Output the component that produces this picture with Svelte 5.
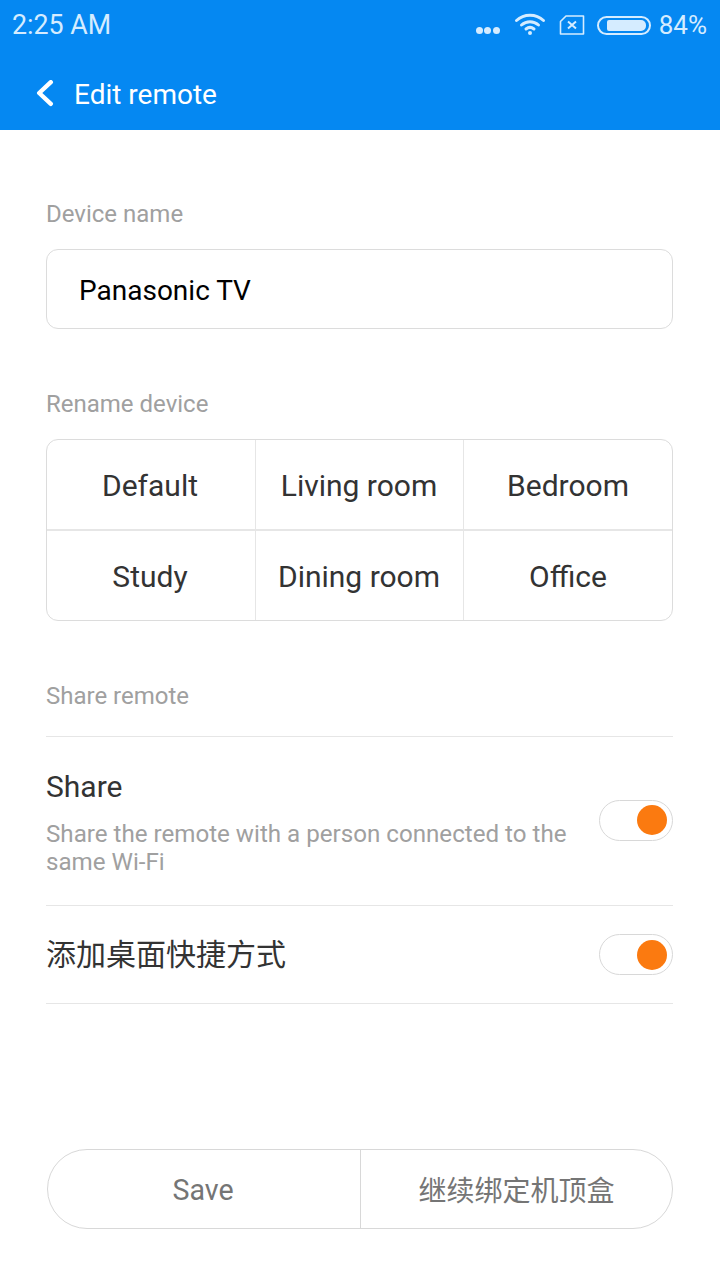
<script>
  let names = ["Default", "Living room", "Bedroom", "Study", "Dining room", "Office"];
</script>

<div class="page">
  <header class="top">
    <div class="status">
      <span class="time">2:25 AM</span>
      <div class="status-right">
        <span class="dots"><i></i><i></i><i></i></span>
        <svg class="wifi" width="32" height="24" viewBox="0 0 32 24" fill="none" stroke="#d5ecff" stroke-width="3" stroke-linecap="round">
          <path d="M2.5 8.5C10 1.5 22 1.5 29.5 8.5" />
          <path d="M7.5 13C12.5 8.5 19.5 8.5 24.5 13" />
          <path d="M12 17C14.5 15 17.5 15 20 17" />
          <circle cx="16" cy="21" r="2" fill="#d5ecff" stroke="none" />
        </svg>
        <svg class="sim" width="26" height="20" viewBox="0 0 26 20" fill="none" stroke="#d5ecff" stroke-width="1.6">
          <path d="M7 1H24.5V19H1.5V6.5Z" stroke-linejoin="round" />
          <path d="M9 6.5L17 13.5M17 6.5L9 13.5" stroke-width="2" />
        </svg>
        <span class="battery"><span class="level"></span></span>
        <span class="pct">84%</span>
      </div>
    </div>
    <div class="title-bar">
      <svg width="20" height="28" viewBox="0 0 20 28" fill="none" stroke="#fff" stroke-width="4.4" stroke-linecap="round" stroke-linejoin="round">
        <path d="M16.8 2.2L5.2 13L16.8 23.8" />
      </svg>
      <span class="title">Edit remote</span>
    </div>
  </header>

  <main class="content">
    <div class="label first">Device name</div>
    <div class="name-box"><span>Panasonic TV</span></div>

    <div class="label second">Rename device</div>
    <div class="grid">
      {#each names as name}
        <div class="cell"><span>{name}</span></div>
      {/each}
    </div>

    <div class="label third">Share remote</div>
    <div class="row share">
      <div class="row-text">
        <div class="row-title">Share</div>
        <div class="row-desc">Share the remote with a person connected to the same Wi-Fi</div>
      </div>
      <span class="toggle"><span class="knob"></span></span>
    </div>
    <div class="row shortcut">
      <div class="row-title cjk">添加桌面快捷方式</div>
      <span class="toggle"><span class="knob"></span></span>
    </div>
  </main>

  <div class="actions">
    <div class="btn save">Save</div>
    <div class="btn cjk">继续绑定机顶盒</div>
  </div>
</div>

<style>
  :global(body) {
    margin: 0;
    background: #fff;
  }

  .page {
    width: 720px;
    height: 1280px;
    display: flex;
    flex-direction: column;
    font-family: Roboto, "Noto Sans CJK SC", sans-serif;
    background: #fff;
  }

  .top {
    height: 130px;
    background: #0588f2;
    color: #fff;
  }

  .status {
    height: 50px;
    display: flex;
    justify-content: space-between;
    align-items: center;
    padding: 0 13px 0 12px;
    color: #d5ecff;
  }

  .time {
    font-size: 26.8px;
  }

  .status-right {
    display: flex;
    align-items: center;
  }

  .dots {
    display: flex;
    gap: 1.5px;
    margin-top: 11px;
    margin-right: 14px;
  }

  .dots i {
    width: 7px;
    height: 7px;
    border-radius: 50%;
    background: #d5ecff;
  }

  .wifi {
    margin-right: 13px;
    margin-top: -3px;
  }

  .sim {
    margin-right: 12px;
  }

  .battery {
    width: 54px;
    height: 19px;
    box-sizing: border-box;
    border: 2px solid #d5ecff;
    border-radius: 10px;
    padding: 2px 3px 2px 8px;
    margin-right: 8px;
    display: flex;
  }

  .level {
    flex: 1;
    background: #d5ecff;
    border-radius: 2px 5px 5px 2px;
  }

  .pct {
    font-size: 26px;
  }

  .title-bar {
    height: 80px;
    box-sizing: border-box;
    padding: 8px 0 0 34px;
    display: flex;
    align-items: center;
  }

  .title {
    font-size: 28px;
    margin-left: 20px;
  }

  .content {
    flex: 1;
    padding: 0 47px 0 46px;
  }

  .label {
    font-size: 24px;
    line-height: 28px;
    color: #a0a0a0;
  }

  .first {
    margin-top: 70px;
  }

  .name-box {
    margin-top: 21px;
    height: 80px;
    box-sizing: border-box;
    border: 1px solid #dcdcdc;
    border-radius: 12px;
    padding: 2px 0 0 32px;
    display: flex;
    align-items: center;
    font-size: 28px;
    color: #000;
  }

  .second {
    margin-top: 61px;
  }

  .grid {
    margin-top: 21px;
    height: 182px;
    box-sizing: border-box;
    border: 1px solid #dcdcdc;
    border-radius: 12px;
    display: grid;
    grid-template-columns: 209px 208px 1fr;
    grid-template-rows: 91px 1fr;
    overflow: hidden;
  }

  .cell {
    display: flex;
    align-items: center;
    justify-content: center;
    padding-top: 2px;
    font-size: 30px;
    color: #333;
    border-right: 1px solid #e6e6e6;
    border-bottom: 2px solid #e6e6e6;
  }

  .cell:nth-child(3n + 1) {
    padding-right: 2px;
  }

  .cell:nth-child(3n + 2) {
    padding-right: 1px;
  }

  .cell:nth-child(3n) {
    border-right: none;
  }

  .cell:nth-child(n + 4) {
    border-bottom: none;
  }

  .third {
    margin-top: 61px;
  }

  .row {
    display: flex;
    align-items: center;
    justify-content: space-between;
    border-bottom: 1px solid #e6e6e6;
  }

  .share {
    margin-top: 26px;
    height: 168px;
    border-top: 1px solid #e6e6e6;
  }

  .share .toggle {
    margin-top: -2px;
  }

  .shortcut {
    height: 97px;
  }

  .row-text {
    width: 530px;
    margin-top: 3px;
  }

  .row-title {
    font-size: 30px;
    line-height: 36px;
    color: #333;
  }

  .share .row-title {
    margin-top: -1px;
  }

  .row-desc {
    font-size: 24.15px;
    line-height: 28px;
    color: #a0a0a0;
    margin-top: 15px;
  }

  .toggle {
    width: 74px;
    height: 41px;
    box-sizing: border-box;
    border: 1px solid #d8d8d8;
    border-radius: 21px;
    display: flex;
    align-items: center;
    justify-content: flex-end;
    padding-right: 5px;
  }

  .knob {
    width: 30px;
    height: 30px;
    border-radius: 50%;
    background: #fb7a10;
  }

  .actions {
    margin: 0 47px 51px 47px;
    height: 80px;
    box-sizing: border-box;
    border: 1px solid #d8d8d8;
    border-radius: 40px;
    display: grid;
    grid-template-columns: 313px 1fr;
  }

  .btn {
    display: flex;
    align-items: center;
    justify-content: center;
    font-size: 28px;
    color: #757575;
  }

  .save {
    font-size: 28.6px;
    padding: 2px 2px 0 0;
    border-right: 1px solid #d8d8d8;
  }
</style>
